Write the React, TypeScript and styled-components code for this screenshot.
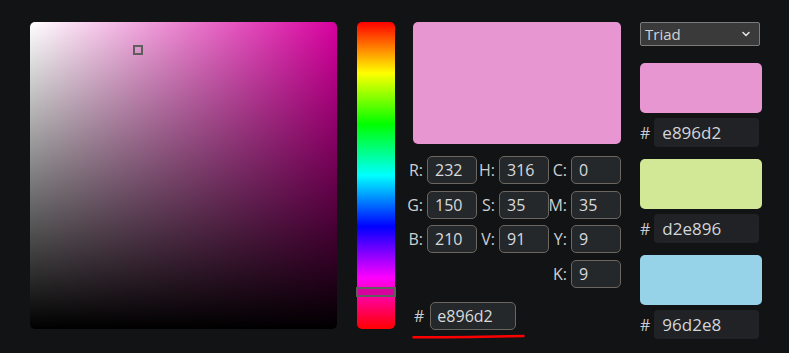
import React from 'react';
import styled, { createGlobalStyle } from 'styled-components';
import { ChevronDown } from 'lucide-react';

const GlobalStyle = createGlobalStyle`
  html, body {
    margin: 0;
    padding: 0;
    background: #121315;
  }
  body {
    font-family: 'Open Sans', 'DejaVu Sans', sans-serif;
    color: #d4d6d8;
  }
`;

const HUE_COLOR = '#d8009f';

const Page = styled.div`
  display: flex;
  align-items: flex-start;
  gap: 18px;
  padding: 22px 0 0 30px;
  width: 789px;
  height: 353px;
  box-sizing: border-box;
`;

const SVBox = styled.div<{ $hue: string }>`
  position: relative;
  width: 307px;
  height: 307px;
  margin-right: 2px;
  border-radius: 5px;
  background: linear-gradient(to top, #000, rgba(0, 0, 0, 0)),
    linear-gradient(to right, #fff, ${(p) => p.$hue});
`;

const SVMarker = styled.div`
  position: absolute;
  width: 10px;
  height: 10px;
  box-sizing: border-box;
  border: 2px solid #5e5e5e;
  transform: translate(-5px, -5px);
`;

const HueBar = styled.div`
  position: relative;
  width: 38px;
  height: 307px;
  border-radius: 5px;
  background: linear-gradient(
    to bottom,
    #ff0000 0%,
    #ffff00 16.67%,
    #00ff00 33.33%,
    #00ffff 50%,
    #0000ff 66.67%,
    #ff00ff 83.33%,
    #ff0000 100%
  );
`;

const HueMarker = styled.div<{ $fill: string }>`
  position: absolute;
  left: -1px;
  right: -1px;
  height: 10px;
  box-sizing: border-box;
  border: 2px solid #5e5e5e;
  background: ${(p) => p.$fill};
  transform: translateY(-5px);
`;

const MiddleCol = styled.div`
  display: flex;
  flex-direction: column;
  align-items: flex-end;
  width: 208px;
  margin-right: 1px;
`;

const Preview = styled.div<{ $color: string }>`
  width: 208px;
  height: 122px;
  border-radius: 5px;
  background: ${(p) => p.$color};
`;

const ValueGrid = styled.div`
  display: grid;
  grid-template-columns: repeat(3, 22px 50px);
  grid-auto-rows: 28px;
  row-gap: 6.7px;
  width: 216px;
  flex: none;
  margin-top: 12px;
`;

const Label = styled.span<{ $col: number }>`
  grid-column: ${(p) => p.$col};
  display: flex;
  align-items: center;
  justify-content: flex-end;
  padding-right: 4px;
  font-size: 16px;
  color: #cdd0d2;
`;

const Field = styled.input<{ $col: number }>`
  grid-column: ${(p) => p.$col};
  width: 50px;
  height: 28px;
  box-sizing: border-box;
  margin: 0;
  padding: 0 0 0 7px;
  border: 1px solid #6b665f;
  border-radius: 5px;
  background: #25282a;
  color: #d8dadc;
  font-family: 'Open Sans', sans-serif;
  font-size: 16px;
  outline: none;
`;

const HexRow = styled.div`
  display: flex;
  align-items: center;
  gap: 6px;
  align-self: flex-start;
  margin-top: 14px;
`;

const Hash = styled.span<{ $big?: boolean }>`
  font-size: 16px;
  color: #c9cdd2;
  padding-left: ${(p) => (p.$big ? '0' : '1px')};
`;

const HexInput = styled.input`
  width: 86px;
  height: 28px;
  box-sizing: border-box;
  margin: 0;
  padding: 0 0 0 6px;
  border: 1px solid #6b665f;
  border-radius: 5px;
  background: #25282a;
  color: #d8dadc;
  font-family: 'Open Sans', sans-serif;
  font-size: 16px;
  outline: none;
`;

const Underline = styled.svg`
  align-self: flex-start;
  margin-top: 4px;
  margin-left: -1px;
  display: block;
`;

const RightCol = styled.div`
  display: flex;
  flex-direction: column;
  width: 122px;
`;

const Select = styled.div`
  display: flex;
  align-items: center;
  justify-content: space-between;
  width: 120px;
  height: 24px;
  box-sizing: border-box;
  padding: 0 7px 0 4px;
  border: 1px solid #7c7c7c;
  border-radius: 2px;
  background: #3a3a3a;
  font-size: 15px;
  color: #d0d4d8;
`;

const Swatch = styled.div<{ $color: string; $first?: boolean }>`
  width: 122px;
  height: 50px;
  border-radius: 5px;
  background: ${(p) => p.$color};
  margin-top: ${(p) => (p.$first ? '17px' : '12px')};
`;

const SwatchHex = styled.div`
  display: flex;
  align-items: center;
  gap: 4px;
  margin-top: 5px;
`;

const SwatchField = styled.input`
  width: 105px;
  height: 29px;
  box-sizing: border-box;
  margin: 0;
  padding: 0 0 0 8px;
  border: none;
  border-radius: 4px;
  background: #212225;
  color: #d2d6da;
  font-family: 'Open Sans', sans-serif;
  font-size: 17px;
  outline: none;
`;

const rows: [string, string, number][] = [
  ['R:', '232', 1], ['H:', '316', 3], ['C:', '0', 5],
  ['G:', '150', 1], ['S:', '35', 3], ['M:', '35', 5],
  ['B:', '210', 1], ['V:', '91', 3], ['Y:', '9', 5],
];

const scheme = ['e896d2', 'd2e896', '96d2e8'];

export default function App() {
  const sat = 0.35;
  const val = 0.91;
  const hue = 316;
  return (
    <>
      <GlobalStyle />
      <Page>
        <SVBox $hue={HUE_COLOR}>
          <SVMarker style={{ left: `${sat * 307 + 1}px`, top: `${(1 - val) * 307}px` }} />
        </SVBox>
        <HueBar>
          <HueMarker $fill={HUE_COLOR} style={{ top: `${(hue / 360) * 307 + 1}px` }} />
        </HueBar>
        <MiddleCol>
          <Preview $color="#e896d2" />
          <ValueGrid>
            {rows.map(([label, value, col]) => (
              <React.Fragment key={label}>
                <Label $col={col}>{label}</Label>
                <Field $col={col + 1} value={value} readOnly />
              </React.Fragment>
            ))}
            <Label $col={5}>K:</Label>
            <Field $col={6} value="9" readOnly />
          </ValueGrid>
          <HexRow>
            <Hash>#</Hash>
            <HexInput value="e896d2" readOnly />
          </HexRow>
          <Underline width="113" height="5" viewBox="0 0 113 5">
            <path d="M1.5 3.2 Q 40 3.4 70 2.8 T 111.5 2" stroke="#ff0000" strokeWidth="2.6" fill="none" strokeLinecap="round" />
          </Underline>
        </MiddleCol>
        <RightCol>
          <Select>
            <span>Triad</span>
            <ChevronDown size={12} strokeWidth={3.2} color="#e0e0e0" />
          </Select>
          {scheme.map((hex, i) => (
            <React.Fragment key={hex}>
              <Swatch $color={`#${hex}`} $first={i === 0} />
              <SwatchHex>
                <Hash $big>#</Hash>
                <SwatchField value={hex} readOnly />
              </SwatchHex>
            </React.Fragment>
          ))}
        </RightCol>
      </Page>
    </>
  );
}
